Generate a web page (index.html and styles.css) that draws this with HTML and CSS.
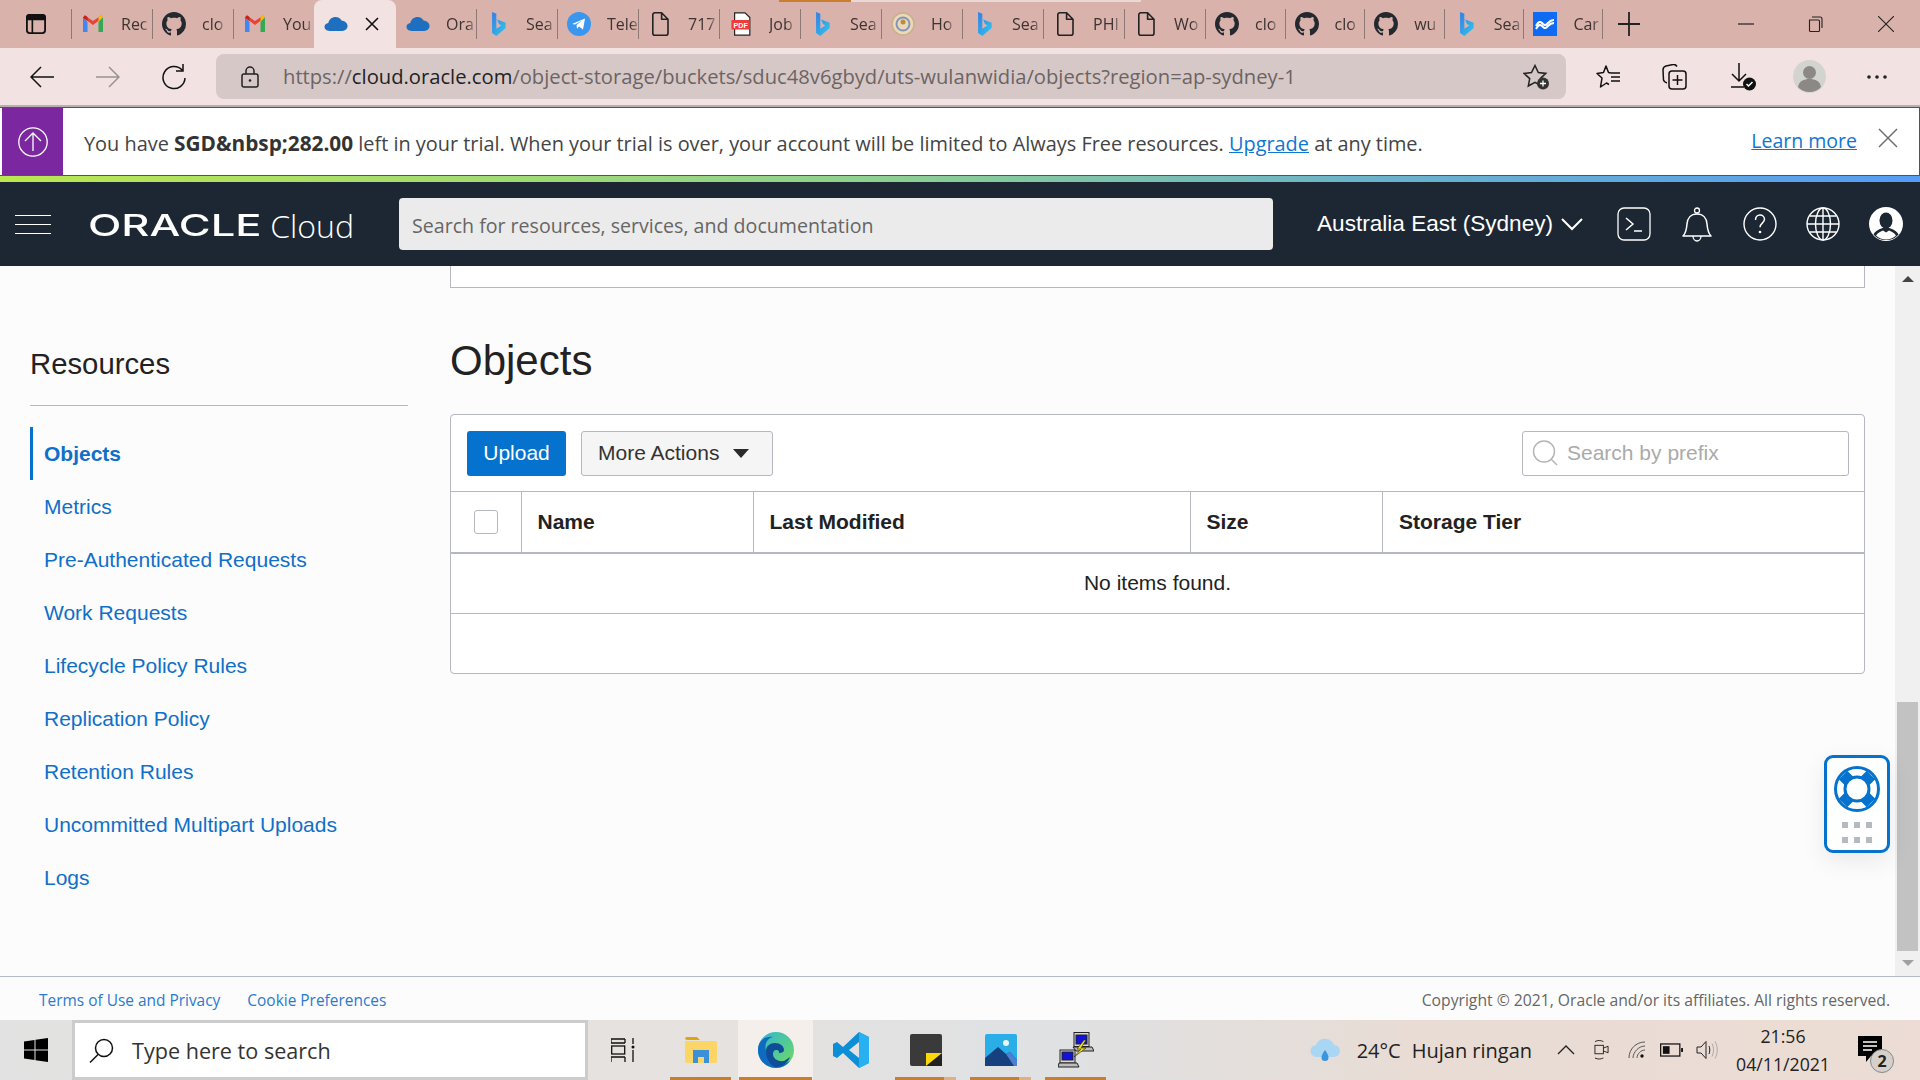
FILE: index.html
```html
<!DOCTYPE html>
<html lang="en">
<head>
    <meta charset="UTF-8">
    <meta name="viewport" content="width=device-width, initial-scale=1.0">
    <title>Objects - Oracle Cloud</title>
    <link rel="stylesheet" href="styles.css">
</head>
<body>

    <!-- Shared tab icons -->
    <svg class="sprite" xmlns="http://www.w3.org/2000/svg">
        <defs>
            <linearGradient id="bing-fill" x1="0" y1="0" x2="1" y2="1">
                <stop offset="0" stop-color="#2f7fe8"></stop>
                <stop offset="1" stop-color="#35c8e8"></stop>
            </linearGradient>
        </defs>
        <symbol id="i-gmail" viewBox="0 0 24 24">
            <path d="M2 5v15h4.500V10z" fill="#4285f4"></path>
            <path d="M22 5v15h-4.500V10z" fill="#34a853"></path>
            <path d="M2 5.500 12 13l10-7.500-1.800-2L12 9 3.800 3.500z" fill="#ea4335"></path>
            <path d="M2 5.500 6.500 9V5L4 3.300z" fill="#c5221f"></path>
            <path d="M22 5.500 17.500 9V5L20 3.300z" fill="#fbbc04"></path>
        </symbol>
        <symbol id="i-github" viewBox="0 0 16 16">
            <path fill="#24292f" d="M8 0C3.58 0 0 3.58 0 8c0 3.54 2.29 6.53 5.47 7.59.4.07.55-.17.55-.38 0-.19-.01-.82-.01-1.49-2.01.37-2.53-.49-2.69-.94-.09-.23-.48-.94-.82-1.13-.28-.15-.68-.52-.01-.53.63-.01 1.08.58 1.23.82.72 1.21 1.87.87 2.33.66.07-.52.28-.87.51-1.07-1.78-.2-3.64-.89-3.64-3.95 0-.87.31-1.59.82-2.15-.08-.2-.36-1.02.08-2.12 0 0 .67-.21 2.2.82.64-.18 1.32-.27 2-.27.68 0 1.36.09 2 .27 1.53-1.04 2.2-.82 2.2-.82.44 1.1.16 1.92.08 2.12.51.56.82 1.27.82 2.15 0 3.07-1.87 3.75-3.65 3.95.29.25.54.73.54 1.48 0 1.07-.01 1.93-.01 2.2 0 .21.15.46.55.38A8.013 8.013 0 0016 8c0-4.42-3.58-8-8-8z"></path>
        </symbol>
        <symbol id="i-cloud" viewBox="0 0 26 16">
            <path fill="#1f6fc0" d="M6 15.500C2.800 15.500.5 13.500.5 11c0-2.300 1.800-4 4.200-4.200C5.500 3 8.700.5 12.500.5c3 0 5.500 1.500 6.800 4 3.600 0 6.200 2.800 6.200 5.700 0 3-2.600 5.300-5.800 5.300z"></path>
        </symbol>
        <symbol id="i-bing" viewBox="0 0 24 24">
            <path fill="url(#bing-fill)" transform="translate(1 0) scale(.85 1)" d="M6 0l5 1.800v15l6-3.300-3-1.400-2-4.700 10 3.400v5.200L11 24l-5-3z"></path>
        </symbol>
        <symbol id="i-file" viewBox="0 0 24 30">
            <path fill="none" stroke="#222" stroke-width="2" stroke-linejoin="round" d="M3 3.500A2.500 2.500 0 0 1 5.500 1H14l8 8v17.500a2.500 2.500 0 0 1-2.500 2.500h-14A2.500 2.500 0 0 1 3 26.500zM14 1v8h8"></path>
        </symbol>
    </svg>

    <div class="app">

        <!-- Tab strip -->
        <div class="tabstrip">
            <div class="progress"><span class="progress-done"></span><span class="progress-rest"></span></div>
            <div class="tab-actions">
                <svg width="20" height="20" viewBox="0 0 22 22"><rect x="1" y="1" width="20" height="20" rx="3" fill="none" stroke="#111" stroke-width="2"></rect><path d="M1 3.500a2.500 2.500 0 0 1 2.500-2.500h15A2.500 2.500 0 0 1 21 3.500V6H1zM7 6v15" fill="#111" stroke="#111" stroke-width="1.800"></path></svg>
            </div>
            <div class="tab"><svg class="tab-icon"><use href="#i-gmail"></use></svg><span class="tab-title">Rec</span></div>
            <div class="tab"><svg class="tab-icon"><use href="#i-github"></use></svg><span class="tab-title">clo</span></div>
            <div class="tab"><svg class="tab-icon"><use href="#i-gmail"></use></svg><span class="tab-title">You</span></div>
            <div class="tab tab-active">
                <svg class="tab-icon"><use href="#i-cloud"></use></svg>
                <svg class="tab-close" width="14" height="14" viewBox="0 0 14 14"><path d="M1 1l12 12M13 1 1 13" stroke="#111" stroke-width="1.600"></path></svg>
            </div>
            <div class="tab tab-next"><svg class="tab-icon"><use href="#i-cloud"></use></svg><span class="tab-title">Ora</span></div>
            <div class="tab"><svg class="tab-icon"><use href="#i-bing"></use></svg><span class="tab-title">Sea</span></div>
            <div class="tab">
                <svg class="tab-icon" viewBox="0 0 24 24"><circle cx="12" cy="12" r="12" fill="#3a96ee"></circle><path d="M5 12l13-5.500-2 11-4-3-2 2.200-.5-3.700 5.500-4.500-7 4z" fill="#fff"></path></svg>
                <span class="tab-title">Tele</span>
            </div>
            <div class="tab"><svg class="tab-icon"><use href="#i-file"></use></svg><span class="tab-title">717</span></div>
            <div class="tab">
                <svg class="tab-icon" viewBox="0 0 24 30"><path d="M4 1h13l6 6v22H4z" fill="#fff" stroke="#222" stroke-width="1.500"></path><rect x="0" y="10" width="23" height="12" rx="1" fill="#ee3c3c"></rect><text x="11.500" y="20" class="pdf-label">PDF</text></svg>
                <span class="tab-title">Job</span>
            </div>
            <div class="tab"><svg class="tab-icon"><use href="#i-bing"></use></svg><span class="tab-title">Sea</span></div>
            <div class="tab">
                <svg class="tab-icon" viewBox="0 0 24 24"><circle cx="12" cy="12" r="11" fill="#ecd9bb" stroke="#c9b089" stroke-width="1.500"></circle><circle cx="12" cy="12" r="6.500" fill="none" stroke="#8296b8" stroke-width="2"></circle><circle cx="12" cy="10" r="2.500" fill="#b98f3c"></circle></svg>
                <span class="tab-title">Ho</span>
            </div>
            <div class="tab"><svg class="tab-icon"><use href="#i-bing"></use></svg><span class="tab-title">Sea</span></div>
            <div class="tab"><svg class="tab-icon"><use href="#i-file"></use></svg><span class="tab-title">PHI</span></div>
            <div class="tab"><svg class="tab-icon"><use href="#i-file"></use></svg><span class="tab-title">Wo</span></div>
            <div class="tab tab-tail"><svg class="tab-icon"><use href="#i-github"></use></svg><span class="tab-title">clo</span></div>
            <div class="tab tab-tail"><svg class="tab-icon"><use href="#i-github"></use></svg><span class="tab-title">clo</span></div>
            <div class="tab tab-tail"><svg class="tab-icon"><use href="#i-github"></use></svg><span class="tab-title">wu</span></div>
            <div class="tab tab-tail"><svg class="tab-icon"><use href="#i-bing"></use></svg><span class="tab-title">Sea</span></div>
            <div class="tab tab-tail tab-last">
                <svg class="tab-icon" viewBox="0 0 24 24"><rect width="24" height="24" fill="#0f6cf2"></rect><path d="M3 14c2-4 4-5 6-3s3 3 5 1 3-4 7-4M3 17c2-4 4-5 6-3s3 3 5 1 3-4 7-4" fill="none" stroke="#fff" stroke-width="2"></path></svg>
                <span class="tab-title">Car</span>
            </div>
            <svg class="tab-new" width="22" height="26" viewBox="0 0 22 26"><path d="M11 1v24M0 13h22" stroke="#222" stroke-width="1.800"></path></svg>
            <div class="window-controls">
                <svg width="16" height="16" viewBox="0 0 16 16"><path d="M0 8h16" stroke="#222" stroke-width="1.200"></path></svg>
                <svg width="16" height="16" viewBox="0 0 16 16"><path d="M4 1h8a2 2 0 0 1 2 2v9M1.500 4h9a1 1 0 0 1 1 1v9.500a1 1 0 0 1-1 1h-8a1 1 0 0 1-1-1z" fill="none" stroke="#222" stroke-width="1.100"></path></svg>
                <svg width="16" height="16" viewBox="0 0 16 16"><path d="M0 0l16 16M16 0 0 16" stroke="#222" stroke-width="1.100"></path></svg>
            </div>
        </div>

        <!-- Address bar -->
        <div class="toolbar">
            <svg class="nav-icon" width="24" height="24" viewBox="0 0 24 24"><path d="M24 12H1M11 2 1 12l10 10" fill="none" stroke="#111" stroke-width="1.500"></path></svg>
            <svg class="nav-icon" width="24" height="24" viewBox="0 0 24 24"><path d="M0 12h23M13 2l10 10-10 10" fill="none" stroke="#9a9191" stroke-width="1.500"></path></svg>
            <svg class="nav-icon" width="24" height="26" viewBox="0 0 24 26"><path d="M20 6a11 11 0 1 0 3 8M21 0v7h-7" fill="none" stroke="#111" stroke-width="1.500"></path></svg>
            <div class="addressbar">
                <svg class="lock" width="18" height="22" viewBox="0 0 18 22"><rect x="1" y="8" width="16" height="13" rx="2" fill="none" stroke="#222" stroke-width="1.500"></rect><path d="M5 8V5a4 4 0 0 1 8 0v3" fill="none" stroke="#222" stroke-width="1.500"></path><circle cx="9" cy="14.500" r="1.300" fill="#222"></circle></svg>
                <span class="url">https://<b>cloud.oracle.com</b>/object-storage/buckets/sduc48v6gbyd/uts-wulanwidia/objects?region=ap-sydney-1</span>
                <svg width="27" height="26" viewBox="0 0 27 26"><path d="M12 1.500l3.300 7 7.500.9-5.500 5.200 1.400 7.400-6.700-3.700-6.700 3.700 1.400-7.400L1 9.400l7.500-.9z" fill="none" stroke="#222" stroke-width="1.500"></path><circle cx="20" cy="19.500" r="6" fill="#333"></circle><path d="M20 16.500v6M17 19.500h6" stroke="#fff" stroke-width="1.300"></path></svg>
            </div>
            <div class="toolbar-actions">
                <svg width="25" height="24" viewBox="0 0 25 24"><path d="M15 8l-2.500-.5L10 1 7.500 7.500 1 8.500 6 13 4.500 22l6-4 2.500 1.500" fill="none" stroke="#111" stroke-width="1.500" stroke-linejoin="round"></path><path d="M15 8h9M15 12h9M15 16h9" stroke="#111" stroke-width="1.500"></path></svg>
                <svg width="25" height="26" viewBox="0 0 25 26"><path d="M5 19c-2-.5-3-1-3.500-3L1 6c0-2 1-3.500 3-4l7-1.500c2-.5 3 .5 4 2" fill="none" stroke="#111" stroke-width="1.500"></path><rect x="7" y="7" width="17" height="18" rx="3" fill="none" stroke="#111" stroke-width="1.500"></rect><path d="M15.500 11v10M10.500 16h10" stroke="#111" stroke-width="1.500"></path></svg>
                <svg class="action-download" width="26" height="28" viewBox="0 0 26 28"><path d="M8 0v17M1 11l7 7 7-7M0 24h13" fill="none" stroke="#111" stroke-width="1.500"></path><circle cx="18.500" cy="21" r="6.500" fill="#111"></circle><path d="M15.500 21l2 2 4-4" fill="none" stroke="#fff" stroke-width="1.500"></path></svg>
                <svg class="action-profile" width="33" height="33" viewBox="0 0 33 33"><circle cx="16.500" cy="16.500" r="16.500" fill="#d3d3cf"></circle><circle cx="16.500" cy="12.500" r="6.500" fill="#8c8985"></circle><path d="M5 27c1-6 6-8 11.500-8S27 21 28 27c-3 3.500-7 5-11.500 5S8 30.500 5 27z" fill="#8c8985"></path></svg>
                <svg width="20" height="4" viewBox="0 0 20 4"><circle cx="2" cy="2" r="1.800" fill="#222"></circle><circle cx="10" cy="2" r="1.800" fill="#222"></circle><circle cx="18" cy="2" r="1.800" fill="#222"></circle></svg>
            </div>
        </div>

        <!-- Trial banner -->
        <div class="banner">
            <div class="banner-badge">
                <svg width="30" height="30" viewBox="0 0 30 30"><circle cx="15" cy="15" r="14.200" fill="none" stroke="#fff" stroke-width="1.300"></circle><path d="M15 24V6M7 14l8-8 8 8" fill="none" stroke="#fff" stroke-width="1.300"></path></svg>
            </div>
            <p class="banner-text">You have <strong>SGD&amp;nbsp;282.00</strong> left in your trial. When your trial is over, your account will be limited to Always Free resources. <a href="#">Upgrade</a> at any time.</p>
            <a class="banner-more" href="#">Learn more</a>
            <svg class="banner-close" width="20" height="20" viewBox="0 0 20 20"><path d="M1 1l18 18M19 1 1 19" stroke="#6f6f6f" stroke-width="1.500"></path></svg>
        </div>
        <div class="rainbow"></div>

        <!-- Oracle header -->
        <header class="oci-header">
            <div class="hamburger"><span></span><span></span><span></span></div>
            <div class="logo"><span class="logo-word">ORACLE</span><span class="logo-cloud">Cloud</span></div>
            <div class="oci-search">Search for resources, services, and documentation</div>
            <div class="region">
                Australia East (Sydney)
                <svg width="22" height="13" viewBox="0 0 22 13"><path d="M1 1l10 10L21 1" fill="none" stroke="#fff" stroke-width="2"></path></svg>
            </div>
            <div class="oci-icons">
                <svg width="34" height="34" viewBox="0 0 34 34"><rect x="1" y="1" width="32" height="32" rx="6" fill="none" stroke="#fff" stroke-width="1.300"></rect><path d="M9 11l7 6-7 6M17 24h8" fill="none" stroke="#fff" stroke-width="1.500"></path></svg>
                <svg class="icon-bell" width="30" height="35" viewBox="0 0 30 35"><path d="M1 29c3-3 3.500-6 4-12 .4-6 4-10 10-10s9.600 4 10 10c.5 6 1 9 4 12z" fill="none" stroke="#fff" stroke-width="1.500" stroke-linejoin="round"></path><circle cx="15" cy="3.500" r="2.500" fill="none" stroke="#fff" stroke-width="1.300"></circle><path d="M11 29c0 3 2 5 4 5s4-2 4-5" fill="none" stroke="#fff" stroke-width="1.300"></path></svg>
                <svg width="34" height="34" viewBox="0 0 34 34"><circle cx="17" cy="17" r="16" fill="none" stroke="#fff" stroke-width="1.400"></circle><path d="M12.500 13c0-3 2-5 4.500-5s4.500 1.800 4.500 4.300c0 3.700-4.500 4-4.500 8" fill="none" stroke="#fff" stroke-width="1.500"></path><circle cx="17" cy="25" r="1.300" fill="#fff"></circle></svg>
                <svg width="34" height="34" viewBox="0 0 34 34"><g fill="none" stroke="#fff" stroke-width="1.400"><circle cx="17" cy="17" r="16"></circle><ellipse cx="17" cy="17" rx="7.500" ry="16"></ellipse><path d="M17 1v32M1 17h32M3.500 9h27M3.500 25h27"></path></g></svg>
                <svg width="34" height="34" viewBox="0 0 34 34"><circle cx="17" cy="17" r="17" fill="#fff"></circle><ellipse cx="17" cy="13.500" rx="6.500" ry="8" fill="#1c2733"></ellipse><path d="M4.500 27.500c2-4 6-5.500 9-6.500h7c3 1 7 2.500 9 6.500A16 16 0 0 1 17 33 16 16 0 0 1 4.500 27.500z" fill="#1c2733"></path><path d="M7 28.500c2-3 5-4.300 7-5l3 2 3-2c2 .7 5 2 7 5a15 15 0 0 1-10 4 15 15 0 0 1-10-4z" fill="#fff"></path></svg>
            </div>
        </header>

        <!-- Console body -->
        <div class="console">
            <aside class="sidebar">
                <h2 class="resources-title">Resources</h2>
                <nav class="resources-nav">
                    <a class="nav-item nav-active" href="#">Objects</a>
                    <a class="nav-item" href="#">Metrics</a>
                    <a class="nav-item" href="#">Pre-Authenticated Requests</a>
                    <a class="nav-item" href="#">Work Requests</a>
                    <a class="nav-item" href="#">Lifecycle Policy Rules</a>
                    <a class="nav-item" href="#">Replication Policy</a>
                    <a class="nav-item" href="#">Retention Rules</a>
                    <a class="nav-item" href="#">Uncommitted Multipart Uploads</a>
                    <a class="nav-item" href="#">Logs</a>
                </nav>
            </aside>

            <main class="content">
                <div class="details-tail"></div>
                <h1 class="page-title">Objects</h1>
                <section class="panel">
                    <div class="panel-bar">
                        <button class="btn btn-primary">Upload</button>
                        <button class="btn btn-default">More Actions <span class="caret"></span></button>
                        <div class="prefix-search">
                            <svg width="26" height="26" viewBox="0 0 26 26"><circle cx="12" cy="11.500" r="10.500" fill="none" stroke="#b4b4b4" stroke-width="1.400"></circle><path d="M19 19l6 6" stroke="#b4b4b4" stroke-width="1.400"></path></svg>
                            Search by prefix
                        </div>
                    </div>
                    <table class="objects-table">
                        <thead>
                            <tr>
                                <th class="col-check"><span class="checkbox"></span></th>
                                <th class="col-name">Name</th>
                                <th class="col-modified">Last Modified</th>
                                <th class="col-size">Size</th>
                                <th>Storage Tier</th>
                            </tr>
                        </thead>
                        <tbody>
                            <tr><td class="empty" colspan="5">No items found.</td></tr>
                        </tbody>
                    </table>
                    <div class="panel-foot"></div>
                </section>
            </main>

            <div class="scrollbar">
                <span class="arrow-up"></span>
                <span class="scroll-track"><span class="scroll-thumb"></span></span>
                <span class="arrow-down"></span>
            </div>

            <!-- Help widget -->
            <div class="help-widget">
                <svg width="46" height="46" viewBox="0 0 46 46"><circle cx="23" cy="23" r="21.500" fill="none" stroke="#0572ce" stroke-width="3"></circle><circle cx="23" cy="23" r="12" fill="none" stroke="#0572ce" stroke-width="3"></circle><path d="M9 9l6 6M37 9l-6 6M9 37l6-6M37 37l-6-6" stroke="#0572ce" stroke-width="12"></path></svg>
                <div class="help-dots"><i></i><i></i><i></i><i></i><i></i><i></i></div>
            </div>
        </div>

        <footer class="oci-footer">
            <a href="#">Terms of Use and Privacy</a>
            <a href="#">Cookie Preferences</a>
            <span class="copyright">Copyright © 2021, Oracle and/or its affiliates. All rights reserved.</span>
        </footer>

        <!-- Windows taskbar -->
        <div class="taskbar">
            <svg class="win-logo" width="24" height="24" viewBox="0 0 24 24"><path d="M0 3.500 10.500 2v9.500H0zM11.500 1.800 24 0v11.500H11.500zM0 12.500h10.500V22L0 20.500zM11.500 12.500H24V24l-12.500-1.800z" fill="#000"></path></svg>
            <div class="win-search">
                <svg width="25" height="25" viewBox="0 0 25 25"><circle cx="15" cy="10" r="8.500" fill="none" stroke="#111" stroke-width="1.500"></circle><path d="M9 16.500 1 24.500" stroke="#111" stroke-width="1.500"></path></svg>
                Type here to search
            </div>
            <div class="task-apps">
                <div class="task-app">
                    <svg class="task-view" width="24" height="24" viewBox="0 0 24 24"><g fill="none" stroke="#111" stroke-width="1.300"><path d="M0 1h14M0 5h14M14 1v4M0 1v4"></path><rect x="0.700" y="8" width="13" height="8"></rect><path d="M0 19h14M0 19v5M14 19v5M22 0v6M22 12v12"></path></g><circle cx="22" cy="9" r="1.500" fill="#111"></circle></svg>
                </div>
                <div class="task-app task-running">
                    <svg width="32" height="26" viewBox="0 0 32 26"><path d="M0 2a2 2 0 0 1 2-2h10l3 3H2z" fill="#e0a50c"></path><path d="M0 4h30a2 2 0 0 1 2 2v18a2 2 0 0 1-2 2H2a2 2 0 0 1-2-2z" fill="#fbd666"></path><path d="M8 13h16v13h-5v-6h-6v6H8z" fill="#3d8fd8"></path></svg>
                </div>
                <div class="task-app task-running task-current">
                    <svg width="36" height="36" viewBox="0 0 36 36"><defs><linearGradient id="edge-top" x1="0" y1="0" x2="1" y2="1"><stop offset="0" stop-color="#30b5d6"></stop><stop offset="1" stop-color="#72db5e"></stop></linearGradient></defs><circle cx="18" cy="18" r="18" fill="url(#edge-top)"></circle><path d="M0 18C0 8 8 4 15 5c-5 1-9 6-7 14 2 8 9 13 16 14l8-4c-3 4-8 7-14 7C8 36 0 28 0 18z" fill="#0d6cc0"></path><path d="M8 19c0-5 4-8 9-8s9 3 9 7c0 2-2 3-5 3 0-2 0-3-3-3-2 0-3 2-3 4 0 4 4 8 11 7l6-4c-2 6-8 10-13 10C13 35 8 27 8 19z" fill="#0f4d99"></path></svg>
                </div>
                <div class="task-app">
                    <svg width="36" height="36" viewBox="0 0 36 36"><path d="M26 0l10 5v26l-10 5L10 21l-6 5-4-2V12l4-2 6 5zM26 10 16 18l10 8z" fill="#0d8fd8"></path><path d="M26 0l10 5v26l-10 5z" fill="#29b0f0"></path></svg>
                </div>
                <div class="task-app task-running task-stack">
                    <svg width="32" height="32" viewBox="0 0 32 32"><rect width="32" height="32" rx="2" fill="#3a3a3a"></rect><path d="M32 19v13H16V19z" fill="#222"></path><path d="M16 19h16L16 32z" fill="#fcd80a"></path></svg>
                </div>
                <div class="task-app task-running task-stack">
                    <svg width="32" height="32" viewBox="0 0 32 32"><rect width="32" height="32" rx="2" fill="#29aee8"></rect><path d="M0 32V24L13 13l8 7 4-2 7 8v6z" fill="#16407e"></path><path d="M21 20l4-2 7 8v6h-3z" fill="#4d7fd0"></path><circle cx="21" cy="9" r="3" fill="#eaf6fc"></circle></svg>
                </div>
                <div class="task-app task-running">
                    <svg width="36" height="36" viewBox="0 0 36 36"><g stroke="#222" stroke-width="1"><rect x="16" y="0.500" width="15" height="14" fill="#d8d8d8"></rect><rect x="18" y="3" width="11" height="9" fill="#1212d8"></rect><path d="M15 15h19l2 4H18z" fill="#bdbdbd"></path><rect x="2" y="18" width="15" height="13" fill="#d8d8d8"></rect><rect x="4" y="20" width="11" height="8" fill="#1212d8"></rect><path d="M1 31h18l2 4H0z" fill="#bdbdbd"></path></g><path d="M26 8 19 17h4l-7 8 12-9h-5l5-8z" fill="#f5e61c" stroke="#222" stroke-width="0.600"></path></svg>
                </div>
            </div>
            <div class="tray">
                <svg class="tray-weather" width="31" height="26" viewBox="0 0 31 26"><path d="M7 20a6 6 0 0 1-1-12C8 3 12 1 16 2c4 0 7 3 8 6a6 6 0 0 1 0 12z" fill="#a9d6f2"></path><path d="M15 13c-2 3-3.500 5-3.500 7.500a3.500 3.500 0 0 0 7 0C18.500 18 17 16 15 13z" fill="#3a95dd"></path></svg>
                <span class="tray-temp">24°C</span>
                <span class="tray-weather-text">Hujan ringan</span>
                <svg class="tray-chevron" width="18" height="10" viewBox="0 0 18 10"><path d="M1 9l8-8 8 8" fill="none" stroke="#222" stroke-width="1.300"></path></svg>
                <svg class="tray-camera" width="15" height="22" viewBox="0 0 16 22"><g fill="none" stroke="#222" stroke-width="1"><rect x="1" y="6" width="9" height="9"></rect><path d="M10 9l5-2v7l-5-2M1 2c3-1.500 6-1.500 9 0M1 19.500c3 1.500 6 1.500 9 0"></path></g></svg>
                <svg class="tray-wifi" width="18" height="18" viewBox="0 0 18 18"><g fill="none" stroke="#555" stroke-width="1"><path d="M1 17C1 8 8 1 17 1M5 17c0-6 6-12 12-12M9 17c0-4 4-8 8-8"></path></g><circle cx="14" cy="15" r="1.700" fill="#111"></circle></svg>
                <svg class="tray-battery" width="23" height="14" viewBox="0 0 24 14"><rect x="0.700" y="0.700" width="20" height="12.600" fill="none" stroke="#111" stroke-width="1.300"></rect><rect x="3" y="3" width="7" height="8" fill="#111"></rect><rect x="22" y="5" width="2" height="4" fill="#111"></rect></svg>
                <svg class="tray-speaker" width="22" height="20" viewBox="0 0 22 20"><path d="M1 7h4l5-5.500v17L5 13H1zM13 6c1 2 1 6 0 8" fill="none" stroke="#222" stroke-width="1"></path><path d="M16 3.500c2 4 2 9 0 13M19 1.500c3 5 3 12 0 17" fill="none" stroke="#aaa" stroke-width="1"></path></svg>
                <div class="clock"><span>21:56</span><span>04/11/2021</span></div>
                <div class="notif">
                    <svg width="24" height="28" viewBox="0 0 24 28"><path d="M0 0h24v20H13l-5 6v-6H0z" fill="#000"></path><path d="M5 6h14M5 10h14M5 14h9" stroke="#fff" stroke-width="1.300"></path></svg>
                    <span class="notif-badge">2</span>
                </div>
            </div>
        </div>
    </div>

</body>
</html>
```

FILE: styles.css
```css
* {
    box-sizing: border-box;
}

html, body {
    margin: 0;
    padding: 0;
    width: 1920px;
    height: 1080px;
    overflow: hidden;
}

body {
    font-family: "Liberation Sans", Arial, sans-serif;
    background-color: #fcfcfc;
    color: #222;
}

a {
    text-decoration: none;
}

.sprite {
    position: absolute;
    width: 0;
    height: 0;
}

.app {
    display: flex;
    flex-direction: column;
    height: 1080px;
}

/* Tab strip */
.tabstrip {
    position: relative;
    display: flex;
    align-items: center;
    height: 48px;
    flex: none;
    background-color: #d8b2ab;
}

.progress {
    position: absolute;
    top: 0;
    left: 779px;
    display: flex;
    height: 2px;
}

.progress-done {
    width: 72px;
    background-color: #c97f2e;
}

.progress-rest {
    width: 290px;
    background-color: #e9d8d3;
}

.tab-actions {
    display: flex;
    justify-content: center;
    width: 71px;
}

.tab {
    display: flex;
    align-items: center;
    flex: none;
    width: 81px;
    height: 30px;
    padding-left: 9px;
    border-left: 1px solid #8d7a76;
}

.tab-tail {
    width: 79.6px;
}

.tab-active {
    width: 82px;
    height: 48px;
    padding-left: 10px;
    border-left: none;
    border-radius: 8px 8px 0 0;
    background-color: #f2e3e2;
}

.tab-next {
    width: 80px;
    border-left: none;
    padding-left: 10px;
}

.tab-last {
    border-right: 1px solid #8d7a76;
}

.tab-icon {
    flex: none;
    width: 24px;
    height: 24px;
}

.tab-close {
    margin-left: 17px;
}

.tab-title {
    flex: none;
    margin-left: 16px;
    white-space: nowrap;
    font-family: "Open Sans", sans-serif;
    font-size: 16px;
    color: #3d3331;
    -webkit-mask-image: linear-gradient(to right, #000 75%, rgba(0, 0, 0, 0.35));
    mask-image: linear-gradient(to right, #000 75%, rgba(0, 0, 0, 0.35));
}

.pdf-label {
    font-family: "Liberation Sans", sans-serif;
    font-size: 9px;
    font-weight: bold;
    fill: #fff;
    text-anchor: middle;
}

.tab-new {
    margin-left: 15px;
}

.window-controls {
    display: flex;
    gap: 54px;
    margin-left: auto;
    margin-right: 26px;
}

/* Address bar */
.toolbar {
    display: flex;
    align-items: center;
    gap: 42px;
    flex: none;
    height: 59px;
    padding: 0 0 0 30px;
    border-bottom: 2px solid #b7b0ae;
    background-color: #f2e3e2;
}

.nav-icon {
    flex: none;
}

.addressbar {
    display: flex;
    align-items: center;
    width: 1350px;
    height: 45px;
    margin-left: -12px;
    padding: 0 16px 0 25px;
    border-radius: 8px;
    background-color: #d6c8c7;
}

.lock {
    flex: none;
}

.url {
    flex: 1;
    margin: -2px 0 0 24px;
    white-space: nowrap;
    font-family: "Open Sans", sans-serif;
    font-size: 20.200px;
    color: #6c6463;
}

.url b {
    font-weight: normal;
    color: #222;
}

.toolbar-actions {
    display: flex;
    align-items: center;
    gap: 41px;
    margin-left: -12px;
}

.action-download {
    margin-left: 3px;
}

.action-profile {
    margin-left: -5px;
}

/* Trial banner */
.banner {
    display: flex;
    align-items: center;
    flex: none;
    height: 69px;
    border: 1px solid #7b2fa0;
    border-left: none;
    background-color: #fff;
}

.banner-badge {
    display: flex;
    align-items: center;
    justify-content: center;
    width: 61px;
    height: 67px;
    margin-left: 2px;
    background-color: #7b27a0;
}

.banner-text {
    flex: 1;
    margin: 2px 0 0 21px;
    font-family: "Open Sans", sans-serif;
    font-size: 19.900px;
    color: #444;
}

.banner-text strong {
    font-size: 20.800px;
    color: #333;
}

.banner-text a,
.banner-more {
    color: #0f76d2;
    text-decoration: underline;
}

.banner-more {
    margin-top: -3px;
    font-family: "Open Sans", sans-serif;
    font-size: 19.500px;
}

.banner-close {
    margin: -7px 21px 0 21px;
}

.rainbow {
    flex: none;
    height: 6px;
    background: linear-gradient(to right, #b9e84f, #8fd18f 45%, #6cb4c8 70%, #559df5);
}

/* Oracle header */
.oci-header {
    display: flex;
    align-items: center;
    flex: none;
    height: 84px;
    padding-left: 15px;
    background-color: #1c2733;
    color: #fff;
}

.hamburger {
    display: flex;
    flex-direction: column;
    gap: 8px;
    width: 36px;
}

.hamburger span {
    height: 1px;
    background-color: #fff;
}

.logo {
    display: flex;
    align-items: center;
    width: 266px;
    margin: 2px 0 0 37px;
}

.logo-word {
    display: inline-block;
    width: 183px;
    font-family: "Inter", sans-serif;
    font-size: 30px;
    font-weight: 500;
    transform: scaleX(1.450);
    transform-origin: left center;
}

.logo-cloud {
    font-family: "Open Sans", sans-serif;
    font-size: 32px;
    font-weight: 300;
}

.oci-search {
    display: flex;
    align-items: center;
    width: 874px;
    height: 52px;
    margin-left: 45px;
    padding: 2px 0 0 13px;
    border-radius: 4px;
    background-color: #ebebeb;
    font-family: "Open Sans", sans-serif;
    font-size: 19.600px;
    color: #666;
}

.region {
    display: flex;
    align-items: center;
    gap: 8px;
    margin-left: 44px;
    font-size: 22.600px;
    white-space: nowrap;
}

.oci-icons {
    display: flex;
    align-items: center;
    gap: 29px;
    margin-left: 34px;
}

.icon-bell {
    margin: 0 2px;
}

/* Console body */
.console {
    position: relative;
    display: flex;
    flex: 1;
    min-height: 0;
}

.sidebar {
    flex: none;
    width: 450px;
    padding-left: 30px;
}

.resources-title {
    width: 378px;
    height: 59px;
    margin: 81px 0 21px 0;
    border-bottom: 1px solid #b5b8c0;
    font-size: 29.300px;
    font-weight: normal;
    line-height: 34px;
}

.resources-nav {
    display: flex;
    flex-direction: column;
}

.nav-item {
    display: flex;
    align-items: center;
    flex: none;
    height: 53.100px;
    padding-left: 14px;
    font-size: 21px;
    color: #0f6fc9;
}

.nav-active {
    border-left: 3px solid #0572ce;
    padding-left: 11px;
    font-weight: bold;
}

.content {
    flex: 1;
    min-width: 0;
    padding-right: 30px;
}

.details-tail {
    height: 22px;
    border: 1px solid #b5b8c0;
    border-top: none;
    background-color: #fff;
}

.page-title {
    margin: 48px 0 29px 0;
    font-size: 42px;
    font-weight: normal;
    line-height: 49px;
}

.panel {
    height: 260px;
    border: 1px solid #b5b8c0;
    border-radius: 4px;
    background-color: #fff;
}

.panel-bar {
    display: flex;
    align-items: center;
    gap: 15px;
    height: 77px;
    padding: 0 15px 0 16px;
    border-bottom: 1px solid #b5b8c0;
}

.btn {
    height: 45px;
    padding: 0;
    border-radius: 3px;
    font-family: "Liberation Sans", sans-serif;
    font-size: 21px;
}

.btn-primary {
    width: 99px;
    border: none;
    background-color: #0572ce;
    color: #fff;
}

.btn-default {
    display: flex;
    align-items: center;
    gap: 14px;
    width: 192px;
    padding-left: 16px;
    border: 1px solid #b5b8c0;
    background-color: #f5f5f5;
    color: #333;
}

.caret {
    width: 0;
    height: 0;
    border-left: 8px solid transparent;
    border-right: 8px solid transparent;
    border-top: 9px solid #2a2a2a;
}

.prefix-search {
    display: flex;
    align-items: center;
    gap: 9px;
    width: 327px;
    height: 45px;
    margin-left: auto;
    padding-left: 9px;
    border: 1px solid #b5b8c0;
    border-radius: 3px;
    font-size: 21px;
    color: #aaa;
}

.objects-table {
    width: 100%;
    border-collapse: collapse;
    table-layout: fixed;
}

.objects-table th {
    height: 61px;
    padding: 0 0 0 16px;
    border-right: 1px solid #b5b8c0;
    border-bottom: 2px solid #b5b8c0;
    text-align: left;
    font-size: 21px;
    color: #222;
}

.objects-table th:last-child {
    border-right: none;
}

.objects-table .col-check {
    width: 70px;
    padding: 0 0 0 23px;
}

.col-name {
    width: 232px;
}

.col-modified {
    width: 437px;
}

.col-size {
    width: 192.500px;
}

.checkbox {
    display: block;
    width: 24px;
    height: 24px;
    border: 1px solid #b5b8c0;
    border-radius: 3px;
    background-color: #fff;
}

.empty {
    height: 60px;
    border-bottom: 1px solid #b5b8c0;
    text-align: center;
    font-size: 21px;
    color: #222;
}

.scrollbar {
    display: flex;
    flex-direction: column;
    align-items: center;
    flex: none;
    width: 25px;
    background-color: #f0f0f0;
}

.arrow-up,
.arrow-down {
    flex: none;
    width: 0;
    height: 0;
    border-left: 6px solid transparent;
    border-right: 6px solid transparent;
}

.arrow-up {
    margin: 10px 0 5px 0;
    border-bottom: 6px solid #444;
}

.arrow-down {
    margin: 9px 0 10px 0;
    border-top: 6px solid #a0a0a0;
}

.scroll-track {
    display: flex;
    flex-direction: column;
    justify-content: flex-end;
    flex: 1;
    width: 21px;
}

.scroll-thumb {
    display: block;
    height: 249px;
    background-color: #c2c2c2;
}

.help-widget {
    position: absolute;
    top: 489px;
    right: 30px;
    display: flex;
    flex-direction: column;
    align-items: center;
    width: 66px;
    height: 98px;
    padding-top: 8px;
    border: 3px solid #0572ce;
    border-radius: 9px;
    background-color: #fff;
    box-shadow: 0 8px 24px rgba(0, 0, 0, 0.08);
}

.help-dots {
    display: grid;
    grid-template-columns: repeat(3, 6px);
    gap: 9px 6px;
    margin-top: 10px;
}

.help-dots i {
    display: block;
    height: 6px;
    background-color: #b5bac1;
}

/* Page footer */
.oci-footer {
    display: flex;
    align-items: center;
    gap: 27px;
    flex: none;
    height: 44px;
    padding: 2px 30px 0 39px;
    border-top: 1px solid #b5bcc8;
    font-family: "Open Sans", sans-serif;
    font-size: 15.450px;
}

.oci-footer a {
    color: #2a7ad0;
}

.copyright {
    margin-left: auto;
    font-size: 15.700px;
    color: #666;
}

/* Windows taskbar */
.taskbar {
    display: flex;
    align-items: center;
    flex: none;
    height: 60px;
    background: linear-gradient(to right, #e2e2e2, #e6e2df 35%, #dfe1e3 55%, #e9dcd4 75%, #ecdcd5);
}

.win-logo {
    margin: 0 24px 0 24px;
}

.win-search {
    display: flex;
    align-items: center;
    gap: 18px;
    width: 516px;
    height: 60px;
    padding-left: 14px;
    border: 3px solid #ccc;
    background-color: #fff;
    font-family: "Open Sans", sans-serif;
    font-size: 21.600px;
    color: #333;
}

.task-apps {
    display: flex;
}

.task-app {
    position: relative;
    display: flex;
    align-items: center;
    justify-content: center;
    width: 75px;
    height: 60px;
}

.task-view {
    margin-left: -5px;
}

.task-running::after {
    content: "";
    position: absolute;
    left: 7px;
    right: 7px;
    bottom: 0;
    height: 3px;
    background-color: #c67f32;
}

.task-current {
    background-color: #f5efec;
}

.task-current::after {
    left: 1px;
    right: 1px;
}

.task-stack::after {
    background: linear-gradient(to right, #c67f32 80%, #dfb083 80%);
}

.tray {
    display: flex;
    align-items: center;
    margin-left: auto;
    padding-right: 38px;
    font-family: "Open Sans", sans-serif;
    color: #222;
}

.tray-temp {
    margin-left: 16px;
    font-size: 20px;
}

.tray-weather-text {
    margin-left: 11px;
    font-size: 20px;
}

.tray-chevron {
    margin-left: 25px;
}

.tray-camera,
.tray-wifi {
    margin-left: 19px;
}

.tray-battery {
    margin-left: 14px;
}

.tray-speaker {
    margin-left: 13px;
}

.clock {
    display: flex;
    flex-direction: column;
    align-items: center;
    gap: 8px;
    margin-left: 18px;
    font-size: 17.700px;
    line-height: 20px;
}

.notif {
    position: relative;
    display: flex;
    margin-left: 28px;
}

.notif-badge {
    position: absolute;
    left: 12px;
    top: 13px;
    display: flex;
    align-items: center;
    justify-content: center;
    width: 24px;
    height: 24px;
    border: 1px solid #888;
    border-radius: 50%;
    background-color: #d5d0cc;
    font-size: 16px;
    font-weight: bold;
}
```
